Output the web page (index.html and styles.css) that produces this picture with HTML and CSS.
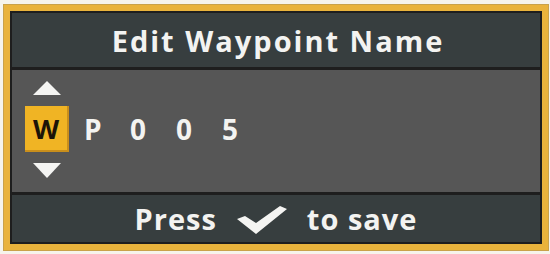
FILE: index.html
```html
<!DOCTYPE html>
<html>
<head>
<meta charset="utf-8">
<link rel="stylesheet" href="styles.css">
</head>
<body>
<div class="frame">
  <div class="inner">
    <div class="header">Edit Waypoint Name</div>
    <div class="editor">
      <div class="cursor-col">
        <div class="arrow up"></div>
        <div class="char-box">W</div>
        <div class="arrow down"></div>
      </div>
      <div class="chars">
        <span class="ch">P</span>
        <span class="ch">0</span>
        <span class="ch">0</span>
        <span class="ch">5</span>
      </div>
    </div>
    <div class="footer">
      <span>Press</span>
      <svg class="check" width="52" height="30" viewBox="0 0 52 30"><polygon points="1,14 9,11 20,18 44,1 51,4 20,29" fill="#f4f4f2"/></svg>
      <span>to save</span>
    </div>
  </div>
</div>
</body>
</html>
```
FILE: styles.css
```css
html, body {
  margin: 0;
  padding: 0;
  background: #f6f4ec;
}
body {
  width: 550px;
  height: 254px;
  overflow: hidden;
  font-family: "Open Sans", "DejaVu Sans", sans-serif;
}
.frame {
  margin: 5px 0 0 4px;
  width: 544px;
  height: 245px;
  box-sizing: border-box;
  border: 6px solid #e9b33c;
  box-shadow: 0 0 0 1px #c9a24a;
  background: #1e1e1e;
  padding: 2px;
}
.inner {
  height: 100%;
  display: flex;
  flex-direction: column;
  gap: 3px;
}
.header {
  height: 54px;
  background: #373e3f;
  color: #f3f3f1;
  font-weight: 700;
  font-size: 29px;
  letter-spacing: 2px;
  display: flex;
  align-items: center;
  justify-content: center;
  padding-left: 4px;
}
.editor {
  flex: 1;
  background: #565656;
  display: flex;
  align-items: center;
  padding-left: 13px;
}
.cursor-col {
  display: flex;
  flex-direction: column;
  align-items: center;
  width: 44px;
  gap: 11px;
  margin-top: -3px;
}
.arrow {
  width: 0;
  height: 0;
  border-left: 14px solid transparent;
  border-right: 14px solid transparent;
}
.arrow.up {
  border-bottom: 14px solid #f4f4f2;
}
.arrow.down {
  border-top: 15px solid #f4f4f2;
}
.char-box {
  width: 44px;
  height: 46px;
  box-sizing: border-box;
  background: #f0b424;
  border-right: 2px solid #c98f1c;
  border-bottom: 2px solid #c98f1c;
  color: #1c1408;
  font-weight: 700;
  font-size: 27px;
  display: flex;
  align-items: center;
  justify-content: center;
}
.chars {
  display: flex;
  margin-left: 15px;
  margin-top: -4px;
}
.ch {
  width: 46px;
  color: #f3f3f1;
  font-weight: 700;
  font-size: 28px;
}
.footer {
  height: 47px;
  background: #373e3f;
  color: #f3f3f1;
  font-weight: 700;
  font-size: 29px;
  letter-spacing: 1px;
  display: flex;
  align-items: center;
  justify-content: center;
  gap: 19px;
  padding-left: 0;
}
.check {
  display: block;
  margin-top: 2px;
}
```
